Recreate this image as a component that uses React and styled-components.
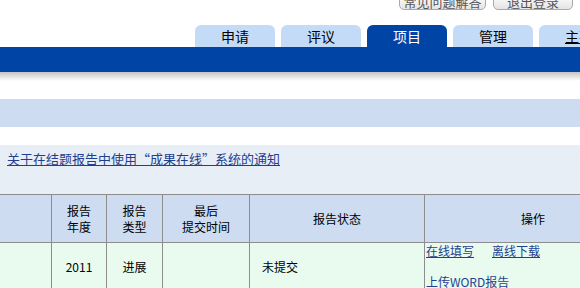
import React from "react";
import styled, { createGlobalStyle } from "styled-components";

const Global = createGlobalStyle`
  html, body { margin: 0; padding: 0; background: #fff; overflow: hidden; }
  body { font-family: "Noto Sans CJK SC", "DejaVu Sans", sans-serif; font-size: 12px; color: #000; }
`;

const Page = styled.div`
  width: 580px;
  height: 288px;
  overflow: hidden;
`;

const TopBar = styled.div`
  display: flex;
  justify-content: flex-end;
  gap: 7px;
  padding-right: 7px;
  height: 11px;
  overflow: hidden;
`;

const TopButton = styled.div`
  width: ${(p) => p.$w}px;
  height: 16px;
  margin-top: -6px;
  box-sizing: border-box;
  border: 1px solid #a9a9a9;
  border-radius: 5px;
  background: linear-gradient(#ffffff, #e4e4e4);
  color: #555;
  font-size: 13px;
  line-height: 14px;
  text-align: center;
`;

const TabRow = styled.div`
  display: flex;
  gap: 6px;
  padding-left: 195px;
  margin-top: 14px;
  height: 22px;
  white-space: nowrap;
`;

const Tab = styled.div`
  flex: 0 0 80px;
  height: 22px;
  border-radius: 6px 6px 0 0;
  background: ${(p) => (p.$active ? "#0044a6" : "#c4dbf8")};
  color: ${(p) => (p.$active ? "#fff" : "#000")};
  font-size: 14px;
  line-height: 22px;
  text-align: center;
  text-decoration: ${(p) => (p.$link ? "underline" : "none")};
`;

const BlueBar = styled.div`
  height: 25px;
  background: #0044a6;
`;

const Shadow = styled.div`
  height: 9px;
  background: linear-gradient(#c4c4c4, #ffffff);
`;

const Band = styled.div`
  margin-top: 18px;
  height: 28px;
  background: #cddcf0;
`;

const Notice = styled.div`
  margin-top: 18px;
  height: 49px;
  box-sizing: border-box;
  padding: 5px 0 0 7px;
  background: #e8eef6;
`;

const NoticeLink = styled.a`
  color: #1f3f8f;
  font-size: 13px;
  line-height: 18px;
  text-decoration: underline;
`;

const Table = styled.table`
  border-collapse: collapse;
  table-layout: fixed;
  width: 636px;
`;

const Th = styled.th`
  width: ${(p) => p.$w}px;
  height: 47px;
  padding: 0;
  background: #cddcf0;
  border: 1px solid #8d8d8d;
  border-left: ${(p) => (p.$first ? "none" : "1px solid #8d8d8d")};
  font-weight: normal;
  font-size: 12px;
  line-height: 16px;
  text-align: center;
  vertical-align: middle;
`;

const Td = styled.td`
  height: 46px;
  padding: 0 0 4px ${(p) => p.$pad || 0}px;
  background: #e8fbee;
  border: 1px solid #8d8d8d;
  border-left: ${(p) => (p.$first ? "none" : "1px solid #8d8d8d")};
  font-size: 12px;
  text-align: ${(p) => (p.$left ? "left" : "center")};
  vertical-align: middle;
`;

const OpsCell = styled.td`
  padding: 0 0 0 1px;
  background: #e8fbee;
  border: 1px solid #8d8d8d;
  vertical-align: top;
`;

const OpsLine = styled.div`
  display: flex;
  gap: 18px;
  height: ${(p) => p.$h}px;
  line-height: 16px;
`;

const OpLink = styled.a`
  color: #1f3f8f;
  font-size: 12px;
  text-decoration: underline;
`;

export default function App() {
  const tabs = [
    { label: "申请" },
    { label: "评议" },
    { label: "项目", active: true },
    { label: "管理" },
    { label: "主要", link: true },
  ];
  return (
    <Page>
      <Global />
      <TopBar>
        <TopButton $w={87}>常见问题解答</TopButton>
        <TopButton $w={80}>退出登录</TopButton>
      </TopBar>
      <TabRow>
        {tabs.map((t) => (
          <Tab key={t.label} $active={t.active} $link={t.link}>
            {t.label}
          </Tab>
        ))}
      </TabRow>
      <BlueBar />
      <Shadow />
      <Band />
      <Notice>
        <NoticeLink>关于在结题报告中使用“成果在线”系统的通知</NoticeLink>
      </Notice>
      <Table>
        <thead>
          <tr>
            <Th $w={51} $first></Th>
            <Th $w={54}>报告<br />年度</Th>
            <Th $w={55}>报告<br />类型</Th>
            <Th $w={86}>最后<br />提交时间</Th>
            <Th $w={174}>报告状态</Th>
            <Th $w={216}>操作</Th>
          </tr>
        </thead>
        <tbody>
          <tr>
            <Td $first></Td>
            <Td>2011</Td>
            <Td>进展</Td>
            <Td></Td>
            <Td $left $pad={12}>未提交</Td>
            <OpsCell>
              <OpsLine $h={31}>
                <OpLink>在线填写</OpLink>
                <OpLink>离线下载</OpLink>
              </OpsLine>
              <OpsLine $h={14}>
                <OpLink>上传WORD报告</OpLink>
              </OpsLine>
            </OpsCell>
          </tr>
        </tbody>
      </Table>
    </Page>
  );
}
